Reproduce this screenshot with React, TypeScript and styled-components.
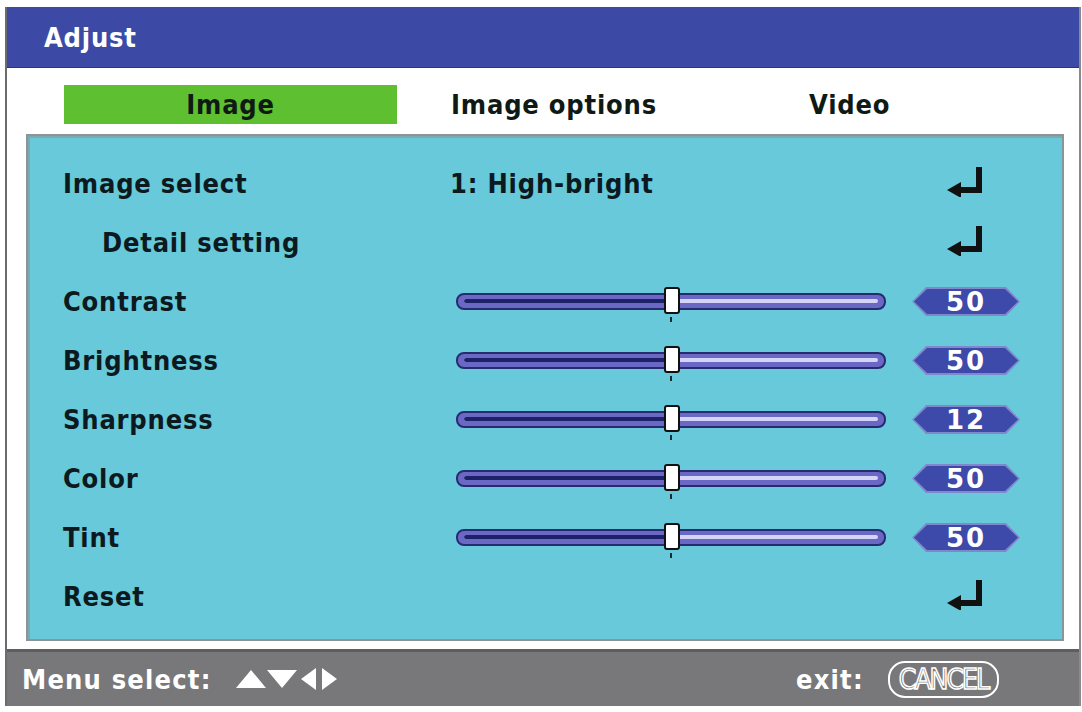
import styled, { createGlobalStyle } from "styled-components";

const GlobalStyle = createGlobalStyle`
  html, body {
    margin: 0;
    padding: 0;
    background: #ffffff;
  }
  body {
    font-family: "DejaVu Sans Condensed", "DejaVu Sans", sans-serif;
    font-stretch: condensed;
  }
`;

const Page = styled.div`
  width: 1082px;
  height: 712px;
  padding: 7px 1px 6px 5px;
  box-sizing: border-box;
`;

const Frame = styled.div`
  height: 100%;
  display: flex;
  flex-direction: column;
  border-left: 2px solid #6c6c70;
  border-right: 2px solid #8a8a8e;
  box-sizing: border-box;
`;

const TitleBar = styled.div`
  height: 60px;
  background: #3c4aa6;
  display: flex;
  align-items: center;
  padding-left: 37px;
  color: #ffffff;
  font-size: 27px;
  font-weight: bold;
  letter-spacing: 0.8px;
  border-bottom: 1px solid #2b357a;
`;

const Body = styled.div`
  flex: 1;
  background: #ffffff;
  padding: 17px 15px 8px 19px;
  display: flex;
  flex-direction: column;
  gap: 10px;
`;

const TabBar = styled.div`
  display: grid;
  grid-template-columns: 387px 358px 1fr;
  padding-left: 38px;
  height: 39px;
`;

const Tab = styled.div<{ $active?: boolean }>`
  width: ${(p) => (p.$active ? "333px" : "auto")};
  background: ${(p) => (p.$active ? "#5ebf30" : "transparent")};
  display: flex;
  align-items: center;
  justify-content: ${(p) => (p.$active ? "center" : "flex-start")};
  font-size: 27px;
  font-weight: bold;
  letter-spacing: 0.8px;
  color: #0f1a14;
`;

const Panel = styled.div`
  flex: 1;
  background: #67c9da;
  border: 2px solid #8b9598;
  box-shadow: inset 2px 2px 0 #7fa9b0;
  padding: 18px 0 12px 35px;
  display: flex;
  flex-direction: column;
`;

const Row = styled.div`
  height: 59px;
  display: grid;
  grid-template-columns: 393px 430px 26px 108px;
  align-items: center;
`;

const Label = styled.div<{ $indent?: boolean }>`
  padding-left: ${(p) => (p.$indent ? "39px" : "0")};
  font-size: 27px;
  font-weight: bold;
  letter-spacing: 0.8px;
  color: #0c1a20;
`;

const Value = styled.div`
  margin-left: -6px;
  font-size: 27px;
  font-weight: bold;
  letter-spacing: 0.8px;
  color: #0c1a20;
`;

const EnterCell = styled.div`
  grid-column: 4;
  display: flex;
  justify-content: center;
  padding-right: 2px;
  margin-top: -4px;
`;

const Track = styled.div`
  position: relative;
  height: 17px;
  border-radius: 8px;
  background: #6a68c4;
  border: 2px solid #262b70;
  box-sizing: border-box;
`;

const Groove = styled.div`
  position: absolute;
  left: 6px;
  right: 6px;
  top: 4px;
  height: 4px;
  border-radius: 2px;
  background: #d4d4f6;
`;

const GrooveFill = styled.div`
  position: absolute;
  left: 0;
  top: 0;
  bottom: 0;
  border-radius: 2px;
  background: #1d2168;
`;

const Thumb = styled.div`
  position: absolute;
  top: -8px;
  width: 16px;
  height: 27px;
  margin-left: -7px;
  background: #ffffff;
  border: 2.5px solid #111111;
  border-radius: 3px;
  box-sizing: border-box;

  &::after {
    content: "";
    position: absolute;
    left: 4px;
    top: 28px;
    width: 2px;
    height: 5px;
    background: #1a2a30;
  }
`;

const Badge = styled.div`
  grid-column: 4;
  height: 29px;
  background: #8088cc;
  clip-path: polygon(0 50%, 14px 0, calc(100% - 14px) 0, 100% 50%, calc(100% - 14px) 100%, 14px 100%);
  display: flex;
  align-items: center;
  justify-content: center;
`;

const BadgeInner = styled.div`
  width: calc(100% - 4px);
  height: calc(100% - 4px);
  background: #3d4aa9;
  clip-path: polygon(0 50%, 13px 0, calc(100% - 13px) 0, 100% 50%, calc(100% - 13px) 100%, 13px 100%);
  display: flex;
  align-items: center;
  justify-content: center;
  padding-top: 1px;
  box-sizing: border-box;
  color: #ffffff;
  font-size: 26px;
  font-weight: bold;
  letter-spacing: 2px;
  font-family: "DejaVu Sans", sans-serif;
  font-stretch: normal;
`;

const Footer = styled.div`
  height: 54px;
  background: #78787b;
  border-top: 3px solid #5e5e62;
  display: flex;
  align-items: center;
  justify-content: space-between;
  padding: 0 80px 0 15px;
  color: #ffffff;
  font-size: 27px;
  font-weight: bold;
  letter-spacing: 1.2px;
`;

const FooterGroup = styled.div`
  display: flex;
  align-items: center;
  gap: 24px;
`;

const Arrows = styled.svg`
  display: block;
`;

const CancelPill = styled.div`
  height: 33px;
  padding: 0 9px;
  border: 2.5px solid #ffffff;
  border-radius: 17px;
  display: flex;
  align-items: center;
  font-size: 28px;
  font-weight: normal;
  letter-spacing: -2px;
  color: #78787b;
  -webkit-text-stroke: 1.5px #ffffff;
  font-family: "Liberation Sans Narrow", "DejaVu Sans Condensed", sans-serif;
`;

const EnterIcon = () => (
  <svg width="36" height="30" viewBox="0 0 36 30">
    <path d="M32 0 V23 H12" stroke="#111" strokeWidth="6" fill="none" />
    <polygon points="0,23 14,15 14,31" fill="#111" />
  </svg>
);

type Item =
  | { kind: "select"; label: string; value: string }
  | { kind: "enter"; label: string; indent?: boolean }
  | { kind: "slider"; label: string; value: number; pos: number };

const items: Item[] = [
  { kind: "select", label: "Image select", value: "1: High-bright" },
  { kind: "enter", label: "Detail setting", indent: true },
  { kind: "slider", label: "Contrast", value: 50, pos: 0.5 },
  { kind: "slider", label: "Brightness", value: 50, pos: 0.5 },
  { kind: "slider", label: "Sharpness", value: 12, pos: 0.5 },
  { kind: "slider", label: "Color", value: 50, pos: 0.5 },
  { kind: "slider", label: "Tint", value: 50, pos: 0.5 },
  { kind: "enter", label: "Reset" },
];

const Slider = ({ pos }: { pos: number }) => (
  <Track>
    <Groove>
      <GrooveFill style={{ width: `${pos * 100}%` }} />
    </Groove>
    <Thumb style={{ left: `${pos * 100}%` }} />
  </Track>
);

export default function App() {
  return (
    <>
      <GlobalStyle />
      <Page>
        <Frame>
          <TitleBar>Adjust</TitleBar>
          <Body>
            <TabBar>
              <Tab $active>Image</Tab>
              <Tab>Image options</Tab>
              <Tab>Video</Tab>
            </TabBar>
            <Panel>
              {items.map((it) => (
                <Row key={it.label}>
                  <Label $indent={it.kind === "enter" && it.indent}>{it.label}</Label>
                  {it.kind === "select" && <Value>{it.value}</Value>}
                  {it.kind === "slider" && (
                    <>
                      <Slider pos={it.pos} />
                      <Badge>
                        <BadgeInner>{it.value}</BadgeInner>
                      </Badge>
                    </>
                  )}
                  {it.kind !== "slider" && (
                    <EnterCell>
                      <EnterIcon />
                    </EnterCell>
                  )}
                </Row>
              ))}
            </Panel>
          </Body>
          <Footer>
            <FooterGroup>
              <span>Menu select:</span>
              <Arrows width="102" height="24" viewBox="0 0 102 24">
                <polygon points="0,21 15,3 30,21" fill="#fff" />
                <polygon points="31,3 61,3 46,21" fill="#fff" />
                <polygon points="80,1 80,23 65,12" fill="#fff" />
                <polygon points="86,1 86,23 101,12" fill="#fff" />
              </Arrows>
            </FooterGroup>
            <FooterGroup>
              <span>exit:</span>
              <CancelPill>CANCEL</CancelPill>
            </FooterGroup>
          </Footer>
        </Frame>
      </Page>
    </>
  );
}
